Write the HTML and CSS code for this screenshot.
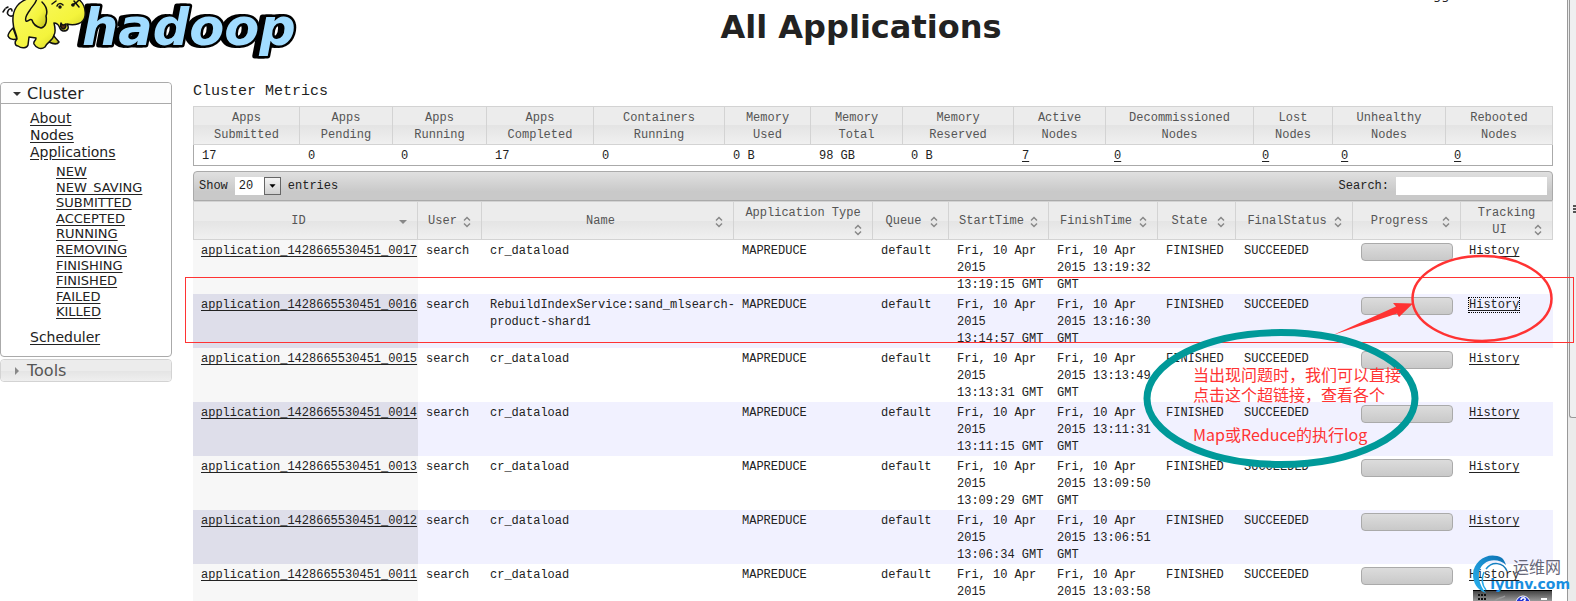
FILE: index.html
```html
<!DOCTYPE html>
<html lang="en">
<head>
    <meta charset="UTF-8">
    <meta name="viewport" content="width=device-width, initial-scale=1.0">
    <title>All Applications</title>
    <link rel="stylesheet" href="styles.css">
</head>
<body>

    <svg class="defs" width="0" height="0" aria-hidden="true">
        <symbol id="sort" viewBox="0 0 16 16">
            <path d="M5 6.500L8 3.500l3 3M5 9.500L8 12.500l3-3" fill="none" stroke="#888" stroke-width="1.500"/>
        </symbol>
        <symbol id="sort-desc" viewBox="0 0 16 16">
            <path d="M4 6h8l-4 4z" fill="#888"/>
        </symbol>
    </svg>

    <div class="page">
        <div class="content">
            <header class="header">
                <svg class="logo" viewBox="0 0 304 60" role="img" aria-label="hadoop">
                    <defs>
                        <linearGradient id="skin" x1="0" y1="0" x2="1" y2="1">
                            <stop offset="0" stop-color="#fbfb6a"/>
                            <stop offset="0.6" stop-color="#f4f43c"/>
                            <stop offset="1" stop-color="#b9b91a"/>
                        </linearGradient>
                    </defs>
                    <text x="82" y="45">hadoop</text>
                    <g fill="url(#skin)" stroke="#111" stroke-width="1.500" stroke-linejoin="round" stroke-linecap="round">
                        <path d="M14 15C10 18 6 14 8 11c1-3 4-3 4 0M5 9L3 12M8 7L6 8" fill="none"/>
                        <path d="M13 28c-3 3-5 5-5 8 2 4 5 4 9 3zM50 30c2 5 5 7 9 12-2 3-6 2-10 0z"/>
                        <path d="M30-2C19 1 12 9 13 22c0 8 4 12 4 17-3 3-2 7 1 7 4 3 9 2 10-1l1-8 7 1c0 3-3 3-2 6 2 4 7 6 11 3 2-5 8-6 9-12 2-3 1-8 0-12 7 0 4 7 9 8 6 0 6-4 4-7 7 2 17 0 18-8 1-7-2-14-8-18z"/>
                        <path d="M37-2c-1 6-5 8-7 12-3 4-5 9-4 11 2 1 4-3 6-1 1 4 5 7 9 8 5-1 6-7 5-12 2-5 0-10-4-14"/>
                        <path d="M61 23c1 3 3 2 5 1 0 2 0 5-3 5-2-1-3-3-2-6z" fill="#5a3010"/>
                        <path d="M57 6c1-3 4-3 6-1M72 5l4-2 5-5M74 1l5 6M52 4l4-3" fill="none"/>
                        <circle cx="60" cy="7" r="1" fill="#111"/>
                        <circle cx="73" cy="5" r="1" fill="#111"/>
                    </g>
                </svg>
                <h1>All Applications</h1>
                <div class="user">Logged in</div>
            </header>

            <div class="columns">
                <nav class="sidebar">
                    <section class="panel">
                        <button class="panel-title" type="button">
                            <svg width="10" height="10" viewBox="0 0 10 10"><path d="M1 3h8L5 7z" fill="#333"/></svg>
                            Cluster
                        </button>
                        <ul class="menu">
                            <li><a href="#">About</a></li>
                            <li><a href="#">Nodes</a></li>
                            <li><a href="#">Applications</a>
                                <ul class="submenu">
                                    <li><a href="#">NEW</a></li>
                                    <li><a href="#">NEW_SAVING</a></li>
                                    <li><a href="#">SUBMITTED</a></li>
                                    <li><a href="#">ACCEPTED</a></li>
                                    <li><a href="#">RUNNING</a></li>
                                    <li><a href="#">REMOVING</a></li>
                                    <li><a href="#">FINISHING</a></li>
                                    <li><a href="#">FINISHED</a></li>
                                    <li><a href="#">FAILED</a></li>
                                    <li><a href="#">KILLED</a></li>
                                </ul>
                            </li>
                            <li><a href="#">Scheduler</a></li>
                        </ul>
                    </section>
                    <section class="panel closed">
                        <button class="panel-title" type="button">
                            <svg width="10" height="10" viewBox="0 0 10 10"><path d="M3 1v8l4-4z" fill="#888"/></svg>
                            Tools
                        </button>
                    </section>
                </nav>

                <main class="main">
                    <h2>Cluster Metrics</h2>
                    <table class="metrics">
                        <colgroup>
                            <col class="w107"><col class="w93"><col class="w94"><col class="w107"><col class="w131"><col class="w86"><col class="w92"><col class="w111"><col class="w92"><col class="w148"><col class="w79"><col class="w113"><col class="w107">
                        </colgroup>
                        <thead>
                            <tr>
                                <th>Apps<br>Submitted</th>
                                <th>Apps<br>Pending</th>
                                <th>Apps<br>Running</th>
                                <th>Apps<br>Completed</th>
                                <th>Containers<br>Running</th>
                                <th>Memory<br>Used</th>
                                <th>Memory<br>Total</th>
                                <th>Memory<br>Reserved</th>
                                <th>Active<br>Nodes</th>
                                <th>Decommissioned<br>Nodes</th>
                                <th>Lost<br>Nodes</th>
                                <th>Unhealthy<br>Nodes</th>
                                <th>Rebooted<br>Nodes</th>
                            </tr>
                        </thead>
                        <tbody>
                            <tr>
                                <td>17</td>
                                <td>0</td>
                                <td>0</td>
                                <td>17</td>
                                <td>0</td>
                                <td>0 B</td>
                                <td>98 GB</td>
                                <td>0 B</td>
                                <td><a href="#">7</a></td>
                                <td><a href="#">0</a></td>
                                <td><a href="#">0</a></td>
                                <td><a href="#">0</a></td>
                                <td><a href="#">0</a></td>
                            </tr>
                        </tbody>
                    </table>

                    <div class="toolbar">
                        <div class="length">
                            <label for="length">Show</label>
                            <span class="select">
                                <select id="length"><option>20</option></select>
                                <svg width="17" height="18" viewBox="0 0 17 18" aria-hidden="true"><path d="M5 7h7l-3.500 4z" fill="#000"/></svg>
                            </span>
                            <span>entries</span>
                        </div>
                        <div class="filter">
                            <label for="search">Search:</label>
                            <input type="text" id="search">
                        </div>
                    </div>

                    <table class="apps">
                        <colgroup>
                            <col class="w225"><col class="w64"><col class="w252"><col class="w139"><col class="w76"><col class="w100"><col class="w109"><col class="w78"><col class="w117"><col class="w108"><col class="w92">
                        </colgroup>
                        <thead>
                            <tr>
                                <th><div class="head"><span>ID</span><svg><use href="#sort-desc"/></svg></div></th>
                                <th><div class="head"><span>User</span><svg><use href="#sort"/></svg></div></th>
                                <th><div class="head"><span>Name</span><svg><use href="#sort"/></svg></div></th>
                                <th>Application Type<div class="head"><span></span><svg><use href="#sort"/></svg></div></th>
                                <th><div class="head"><span>Queue</span><svg><use href="#sort"/></svg></div></th>
                                <th><div class="head"><span>StartTime</span><svg><use href="#sort"/></svg></div></th>
                                <th><div class="head"><span>FinishTime</span><svg><use href="#sort"/></svg></div></th>
                                <th><div class="head"><span>State</span><svg><use href="#sort"/></svg></div></th>
                                <th><div class="head"><span>FinalStatus</span><svg><use href="#sort"/></svg></div></th>
                                <th><div class="head"><span>Progress</span><svg><use href="#sort"/></svg></div></th>
                                <th>Tracking<div class="head"><span>UI</span><svg><use href="#sort"/></svg></div></th>
                            </tr>
                        </thead>
                        <tbody>
                            <tr>
                                <td class="id"><a href="#">application_1428665530451_0017</a></td>
                                <td>search</td>
                                <td class="name">cr_dataload</td>
                                <td>MAPREDUCE</td>
                                <td>default</td>
                                <td>Fri, 10 Apr 2015 13:19:15 GMT</td>
                                <td>Fri, 10 Apr 2015 13:19:32 GMT</td>
                                <td>FINISHED</td>
                                <td>SUCCEEDED</td>
                                <td><div class="progress"></div></td>
                                <td><a href="#">History</a></td>
                            </tr>
                            <tr>
                                <td class="id"><a href="#">application_1428665530451_0016</a></td>
                                <td>search</td>
                                <td class="name">RebuildIndexService:sand_mlsearch-<br>product-shard1</td>
                                <td>MAPREDUCE</td>
                                <td>default</td>
                                <td>Fri, 10 Apr 2015 13:14:57 GMT</td>
                                <td>Fri, 10 Apr 2015 13:16:30 GMT</td>
                                <td>FINISHED</td>
                                <td>SUCCEEDED</td>
                                <td><div class="progress"></div></td>
                                <td><a class="focused" href="#">History</a></td>
                            </tr>
                            <tr>
                                <td class="id"><a href="#">application_1428665530451_0015</a></td>
                                <td>search</td>
                                <td class="name">cr_dataload</td>
                                <td>MAPREDUCE</td>
                                <td>default</td>
                                <td>Fri, 10 Apr 2015 13:13:31 GMT</td>
                                <td>Fri, 10 Apr 2015 13:13:49 GMT</td>
                                <td>FINISHED</td>
                                <td>SUCCEEDED</td>
                                <td><div class="progress"></div></td>
                                <td><a href="#">History</a></td>
                            </tr>
                            <tr>
                                <td class="id"><a href="#">application_1428665530451_0014</a></td>
                                <td>search</td>
                                <td class="name">cr_dataload</td>
                                <td>MAPREDUCE</td>
                                <td>default</td>
                                <td>Fri, 10 Apr 2015 13:11:15 GMT</td>
                                <td>Fri, 10 Apr 2015 13:11:31 GMT</td>
                                <td>FINISHED</td>
                                <td>SUCCEEDED</td>
                                <td><div class="progress"></div></td>
                                <td><a href="#">History</a></td>
                            </tr>
                            <tr>
                                <td class="id"><a href="#">application_1428665530451_0013</a></td>
                                <td>search</td>
                                <td class="name">cr_dataload</td>
                                <td>MAPREDUCE</td>
                                <td>default</td>
                                <td>Fri, 10 Apr 2015 13:09:29 GMT</td>
                                <td>Fri, 10 Apr 2015 13:09:50 GMT</td>
                                <td>FINISHED</td>
                                <td>SUCCEEDED</td>
                                <td><div class="progress"></div></td>
                                <td><a href="#">History</a></td>
                            </tr>
                            <tr>
                                <td class="id"><a href="#">application_1428665530451_0012</a></td>
                                <td>search</td>
                                <td class="name">cr_dataload</td>
                                <td>MAPREDUCE</td>
                                <td>default</td>
                                <td>Fri, 10 Apr 2015 13:06:34 GMT</td>
                                <td>Fri, 10 Apr 2015 13:06:51 GMT</td>
                                <td>FINISHED</td>
                                <td>SUCCEEDED</td>
                                <td><div class="progress"></div></td>
                                <td><a href="#">History</a></td>
                            </tr>
                            <tr>
                                <td class="id"><a href="#">application_1428665530451_0011</a></td>
                                <td>search</td>
                                <td class="name">cr_dataload</td>
                                <td>MAPREDUCE</td>
                                <td>default</td>
                                <td>Fri, 10 Apr 2015</td>
                                <td>Fri, 10 Apr 2015 13:03:58</td>
                                <td>FINISHED</td>
                                <td>SUCCEEDED</td>
                                <td><div class="progress"></div></td>
                                <td><a href="#">History</a></td>
                            </tr>
                        </tbody>
                    </table>
                </main>
            </div>
        </div>
        <div class="scrollbar">
            <div class="thumb"><i></i></div>
        </div>
    </div>

    <!-- drawn notes over the table -->
    <div class="notes">
        <svg width="1576" height="601" viewBox="0 0 1576 601" fill="none">
            <rect x="185.500" y="277.500" width="1388" height="65" stroke="#f33"/>
            <ellipse cx="1482" cy="298.500" rx="69.500" ry="42.500" stroke="#f33" stroke-width="2.500"/>
            <path d="M1333 335L1396 306.500 1393 303 1413 303.500 1399 317 1397 313.500z" fill="#f33"/>
            <ellipse cx="1281" cy="398.500" rx="134" ry="66" stroke="#099" stroke-width="7"/>
        </svg>
        <p>当出现问题时，我们可以直接<br>点击这个超链接，查看各个<br><br>Map或Reduce的执行log</p>
    </div>

    <div class="floatbar">
        <svg width="79" height="11" viewBox="0 0 79 11">
            <path d="M5 4h9M5 8h9" stroke="#111" stroke-width="2" stroke-dasharray="2 1"/>
            <path d="M21 11c3-5 7-3 11-6" fill="none" stroke="#999" stroke-width="1.500"/>
            <circle cx="50" cy="12" r="7" fill="#2136d6" stroke="#fff"/>
            <path d="M48 9c0-3 5-3 4 0l-2 2" fill="none" stroke="#fff" stroke-width="1.500"/>
            <path d="M68 8h6" stroke="#fff" stroke-width="2"/>
        </svg>
    </div>
    <div class="watermark">
        <svg width="40" height="42" viewBox="0 0 40 42" fill="none">
            <defs>
                <linearGradient id="ring" x1="1" y1="0" x2="0" y2="1">
                    <stop offset="0" stop-color="#0d6fb0"/>
                    <stop offset="1" stop-color="#29b4f2"/>
                </linearGradient>
            </defs>
            <path d="M30 4C17-3 2 6 1 20c0 9 4 16 13 19C5 29 3 12 17 7c6-2 13 0 17 4-1-3-2-5-4-7z" fill="url(#ring)"/>
            <path d="M35 17C31 8 20 7 14 15M12 18c-3 7-2 13 2 18" stroke="url(#ring)" stroke-width="1.500"/>
        </svg>
        <div>
            <span class="wm-name">运维网</span>
            <span class="wm-site">iyunv.com</span>
        </div>
    </div>

</body>
</html>
```
FILE: styles.css
```css
* {
    box-sizing: border-box;
}
body {
    margin: 0;
    height: 100vh;
    overflow: hidden;
    position: relative;
    background: white;
    color: #222;
    font: 12px/17px "Liberation Mono", monospace;
}
a {
    color: #222;
    text-underline-offset: 2px;
}
.defs {
    position: absolute;
}
.page {
    display: flex;
    height: 100%;
}
.content {
    flex: 1;
    min-width: 0;
    overflow: hidden;
}

/* header */
.header {
    display: flex;
    align-items: flex-start;
    height: 82px;
}
.logo {
    width: 304px;
    height: 60px;
}
.logo text {
    font: italic bold 51px "DejaVu Sans", sans-serif;
    paint-order: stroke;
    fill: #a1dcff;
    stroke: #000;
    stroke-width: 5px;
    stroke-linejoin: round;
    filter: drop-shadow(-4px 0 #000);
}
h1 {
    flex: 1;
    margin: 7px 0 0;
    font: bold 32px/40px "DejaVu Sans", sans-serif;
    text-align: center;
}
.user {
    width: 149px;
    margin-top: -13px;
    font: 13px/16px "DejaVu Sans", sans-serif;
}

/* sidebar */
.columns {
    display: flex;
    gap: 21px;
    padding-right: 14px;
}
.sidebar {
    width: 172px;
    flex: none;
    font-family: "DejaVu Sans", sans-serif;
}
.panel {
    border: 1px solid #aaa;
    border-radius: 4px;
    margin-bottom: 2px;
}
.panel-title {
    display: flex;
    align-items: center;
    gap: 5px;
    width: 100%;
    height: 21px;
    padding: 1px 0 0 11px;
    border: 0;
    border-bottom: 1px solid #aaa;
    border-radius: 4px 4px 0 0;
    background: #fdfdfd;
    color: #222;
    font: 16px/20px "DejaVu Sans", sans-serif;
}
.closed {
    border-color: #d3d3d3;
}
.closed .panel-title {
    border: 0;
    border-radius: 4px;
    background: linear-gradient(#ececec 50%, #e4e4e4 50%, #efefef);
    color: #555;
}
.menu, .submenu {
    margin: 0;
    padding: 0;
    list-style: none;
}
.menu {
    padding: 6px 0 10px 29px;
    font-size: 14px;
    line-height: 17px;
}
.submenu {
    padding: 3px 0 9px 26px;
    font-size: 13px;
    line-height: 1.2;
}

/* tables */
.main {
    flex: 1;
    min-width: 0;
}
h2 {
    margin: 0;
    height: 24px;
    font: 15px/19px "Liberation Mono", monospace;
}
table {
    width: 100%;
    table-layout: fixed;
    border-collapse: separate;
    border-spacing: 0;
}
th {
    height: 39px;
    padding: 2px 0 0;
    border: solid #d3d3d3;
    border-width: 1px 1px 1px 0;
    background: linear-gradient(#ececec 50%, #e4e4e4 50%, #f0f0f0);
    color: #555;
    font-weight: normal;
}
th:first-child {
    border-left-width: 1px;
}
td {
    padding: 3px 5px 0 8px;
    vertical-align: top;
}
.metrics th {
    padding-top: 3px;
}
.metrics td {
    height: 20px;
    border-bottom: 1px solid #aaa;
}
.metrics td:first-child {
    border-left: 1px solid #aaa;
}
.metrics td:last-child {
    border-right: 1px solid #aaa;
}
.apps td {
    height: 54px;
}
.apps td.id, .apps td.name {
    padding-right: 0;
    white-space: nowrap;
}
.id {
    background: #f7f7f7;
}
.apps tbody tr:nth-child(even) {
    background: #f1f1ff;
}
.apps tbody tr:nth-child(even) .id {
    background: #dedeea;
}
.head {
    display: flex;
    align-items: center;
    padding: 0 6px 0 8px;
}
.head span {
    flex: 1;
}
.head svg {
    flex: none;
    width: 16px;
    height: 16px;
}
.progress {
    width: 92px;
    height: 18px;
    border: 1px solid #aaa;
    border-radius: 4px;
    background: linear-gradient(#dcdcdc, #c9c9c9);
}
.focused {
    outline: 1px dotted #000;
}

/* column widths */
.w64 { width: 64px; }
.w76 { width: 76px; }
.w78 { width: 78px; }
.w79 { width: 79px; }
.w86 { width: 86px; }
.w92 { width: 92px; }
.w93 { width: 93px; }
.w94 { width: 94px; }
.w100 { width: 100px; }
.w107 { width: 107px; }
.w108 { width: 108px; }
.w109 { width: 109px; }
.w111 { width: 111px; }
.w113 { width: 113px; }
.w117 { width: 117px; }
.w131 { width: 131px; }
.w139 { width: 139px; }
.w148 { width: 148px; }
.w225 { width: 225px; }
.w252 { width: 252px; }

/* toolbar */
.toolbar {
    display: flex;
    justify-content: space-between;
    align-items: center;
    height: 30px;
    margin-top: 5px;
    padding: 0 5px;
    border: 1px solid #aaa;
    border-radius: 4px 4px 0 0;
    background: linear-gradient(#e0e0e0, #c9c9c9 70%);
}
.length, .filter {
    display: flex;
    align-items: center;
    gap: 7px;
}
.select {
    position: relative;
    display: flex;
}
.select svg {
    position: absolute;
    right: 0;
    top: 0;
    border: 1px solid #666;
    background: linear-gradient(#f4f4f4, #d0d0d0);
    pointer-events: none;
}
select, input {
    height: 18px;
    border: 0;
    border-radius: 0;
    background: white;
    color: #222;
    font: 12px/18px "Liberation Mono", monospace;
}
select {
    appearance: none;
    width: 46px;
    padding: 0 0 0 4px;
}
input {
    width: 151px;
}

/* page scrollbar */
.scrollbar {
    width: 9px;
    border-left: 1px solid #999;
    background: #ebebeb;
}
.thumb {
    display: flex;
    align-items: center;
    justify-content: flex-end;
    height: 418px;
    margin-left: 1px;
    border: solid #999;
    border-width: 0 0 1px 1px;
    border-radius: 0 0 0 3px;
    background: #efeff0;
}
.thumb i {
    width: 3px;
    height: 8px;
    background: repeating-linear-gradient(#555 0 2px, #efeff0 2px 3px);
}

/* overlays */
.notes {
    position: absolute;
    left: 0;
    top: 0;
    pointer-events: none;
}
.notes svg {
    display: block;
}
.notes p {
    position: absolute;
    left: 1193px;
    top: 364px;
    margin: 0;
    color: #f33;
    font: 16px/20px "Noto Sans CJK SC", sans-serif;
    white-space: nowrap;
}
.floatbar {
    position: absolute;
    right: 24px;
    bottom: 0;
    height: 11px;
    border-top: 1px solid #000;
    background: linear-gradient(#444, #999);
}
.floatbar svg {
    display: block;
}
.watermark {
    position: absolute;
    right: 6px;
    bottom: 5px;
    display: flex;
    height: 42px;
}
.watermark div {
    display: flex;
    flex-direction: column;
    align-items: flex-end;
    margin: 3px 0 0 -22px;
}
.watermark span {
    line-height: 18px;
}
.wm-name {
    margin-right: 9px;
    color: #667;
    font: 16px "Noto Sans CJK SC", sans-serif;
}
.wm-site {
    color: #1a8fe0;
    font: bold 14px "DejaVu Sans", sans-serif;
}
```
